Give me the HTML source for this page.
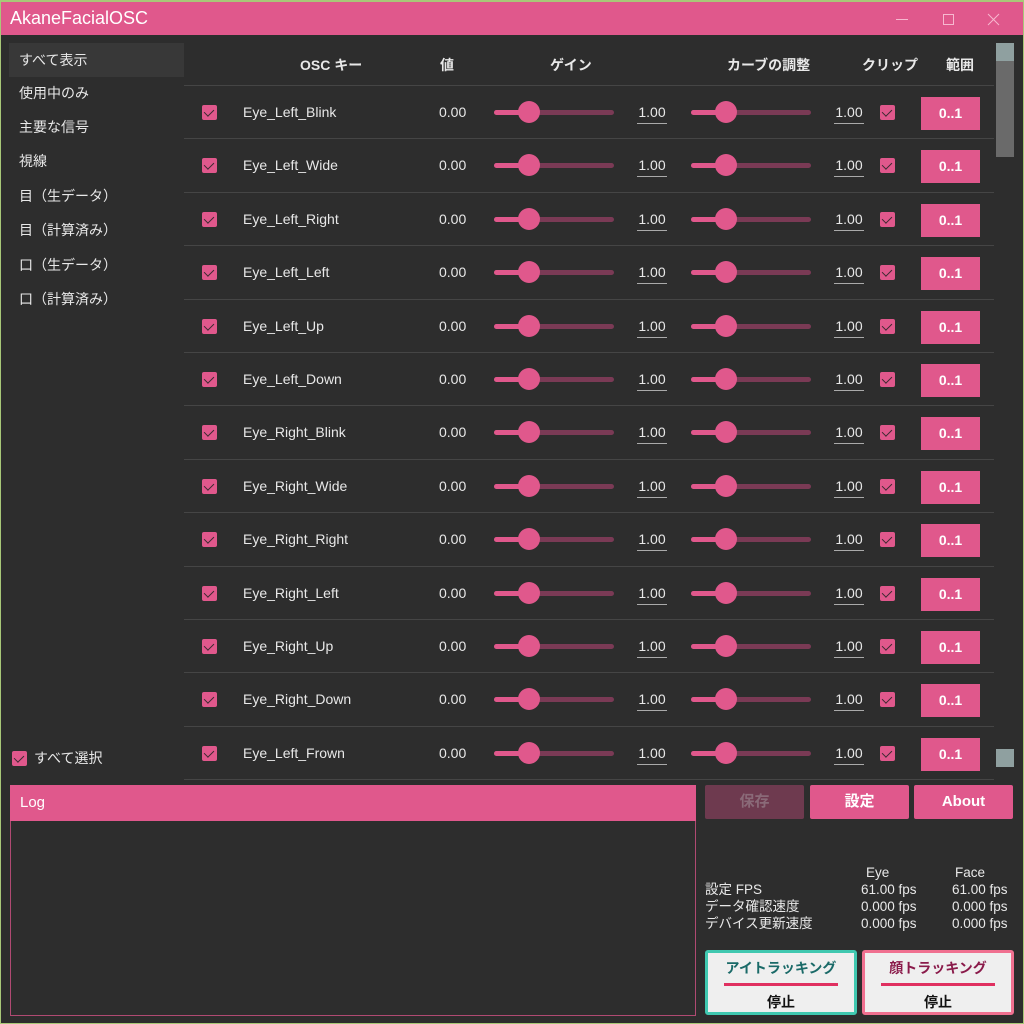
<!DOCTYPE html>
<html><head><meta charset="utf-8"><style>
*{box-sizing:border-box;margin:0;padding:0}
body{width:1024px;height:1024px;background:#2d2d2d;font-family:"Liberation Sans","Noto Sans CJK JP",sans-serif;color:#e8e8e8;position:relative;overflow:hidden;font-size:14px}
.frame{position:absolute;left:0;top:0;width:1024px;height:1024px;border:1px solid #a8c878;border-top-width:2px}
.title{position:absolute;left:1px;top:2px;width:1022px;height:33px;background:#e0588c;color:#fff;font-size:18px;line-height:33px;padding-left:9px}
.side{position:absolute;left:9px;width:175px;height:34px;line-height:34px;padding-left:10px;font-size:14px}
.ab{position:absolute}
.row{position:absolute;left:184px;width:810px;height:53.4px;border-bottom:1px solid #454545}
.cb{position:absolute;width:15px;height:15px;background:#e0588c;border-radius:2px}
.cb:after{content:"";position:absolute;left:4px;top:2px;width:5px;height:8px;border:solid #3a2a30;border-width:0 1.6px 1.6px 0;transform:rotate(45deg)}
.tr{position:absolute;height:5px;background:#7a3a55;border-radius:3px}
.tf{position:absolute;height:5px;background:#e0588c;border-radius:3px}
.th{position:absolute;width:22px;height:22px;border-radius:50%;background:#e0588c}
.num{position:absolute;width:30px;text-align:center;border-bottom:1px solid #aaa;padding-bottom:3px}
.rb{position:absolute;width:59px;height:33px;background:#e0588c;color:#fff;text-align:center;line-height:33px;font-weight:bold}
.btn{position:absolute;top:785px;width:99px;height:34px;line-height:34px;text-align:center;font-weight:bold;font-size:15px;border-radius:2px}
</style></head><body>
<div class="frame"></div>
<div class="title">AkaneFacialOSC</div>
<svg class="ab" style="left:880px;top:2px" width="140" height="33">
<line x1="16" y1="17.5" x2="28" y2="17.5" stroke="#f7b8d0" stroke-width="1"/>
<rect x="63.5" y="12.5" width="10" height="10" fill="none" stroke="#f7b8d0" stroke-width="1"/>
<line x1="108" y1="12" x2="119" y2="23" stroke="#f7b8d0" stroke-width="1"/>
<line x1="119" y1="12" x2="108" y2="23" stroke="#f7b8d0" stroke-width="1"/>
</svg>

<div class="side" style="top:43px;background:#383838">すべて表示</div>
<div class="side" style="top:76px">使用中のみ</div>
<div class="side" style="top:110px">主要な信号</div>
<div class="side" style="top:144px">視線</div>
<div class="side" style="top:179px">目（生データ）</div>
<div class="side" style="top:213px">目（計算済み）</div>
<div class="side" style="top:248px">口（生データ）</div>
<div class="side" style="top:282px">口（計算済み）</div>
<div class="cb" style="left:12px;top:751px"></div>
<div class="ab" style="left:34px;top:748px">すべて選択</div>

<div class="ab" style="left:184px;top:43px;width:810px;height:43px;border-bottom:1px solid #454545;font-weight:bold;font-size:14px">
<span class="ab" style="left:116px;top:12px">OSC キー</span>
<span class="ab" style="left:256px;top:12px">値</span>
<span class="ab" style="left:366px;top:12px">ゲイン</span>
<span class="ab" style="left:543px;top:12px">カーブの調整</span>
<span class="ab" style="left:678px;top:12px">クリップ</span>
<span class="ab" style="left:762px;top:12px">範囲</span>
</div>

<div class="ab" style="left:995px;top:43px;width:19px;height:737px;background:#2d2d2d"></div>
<div class="ab" style="left:996px;top:43px;width:18px;height:114px;background:#6a6a6a"></div>
<div class="ab" style="left:996px;top:43px;width:18px;height:18px;background:#8fa0a0"></div>
<div class="ab" style="left:996px;top:749px;width:18px;height:18px;background:#8fa0a0"></div>

<div id="rows"></div>
<script>
var n=["Eye_Left_Blink","Eye_Left_Wide","Eye_Left_Right","Eye_Left_Left","Eye_Left_Up","Eye_Left_Down","Eye_Right_Blink","Eye_Right_Wide","Eye_Right_Right","Eye_Right_Left","Eye_Right_Up","Eye_Right_Down","Eye_Left_Frown"];
var h="";
for(var i=0;i<n.length;i++){var t=86+i*53.4;
h+='<div class="row" style="top:'+t+'px">'+
'<div class="cb" style="left:18px;top:19px"></div>'+
'<span class="ab" style="left:59px;top:18px">'+n[i]+'</span>'+
'<span class="ab" style="left:255px;top:18px">0.00</span>'+
'<div class="tr" style="left:310px;top:24px;width:120px"></div><div class="tf" style="left:310px;top:24px;width:35px"></div><div class="th" style="left:334px;top:15px"></div>'+
'<span class="num" style="left:453px;top:18px">1.00</span>'+
'<div class="tr" style="left:507px;top:24px;width:120px"></div><div class="tf" style="left:507px;top:24px;width:35px"></div><div class="th" style="left:531px;top:15px"></div>'+
'<span class="num" style="left:650px;top:18px">1.00</span>'+
'<div class="cb" style="left:696px;top:19px"></div>'+
'<div class="rb" style="left:737px;top:11px">0..1</div></div>';}
document.getElementById("rows").innerHTML=h;
</script>
<div class="ab" style="left:184px;top:780px;width:830px;height:4px;background:#2d2d2d"></div>

<div class="ab" style="left:10px;top:785px;width:686px;height:231px;border:1px solid #b04a72"></div>
<div class="ab" style="left:10px;top:785px;width:686px;height:36px;background:#e0588c;color:#fff;line-height:36px;padding-left:10px;font-size:15px">Log</div>

<div class="btn" style="left:705px;background:#6e3a4f;color:#8a6a78">保存</div>
<div class="btn" style="left:810px;background:#e0588c;color:#fff">設定</div>
<div class="btn" style="left:914px;background:#e0588c;color:#fff">About</div>

<div class="ab" style="left:705px;top:864px;width:310px;font-size:13.5px;line-height:17px">
<div style="position:absolute;left:161px;top:0">Eye</div><div style="position:absolute;left:250px;top:0">Face</div>
<div style="position:absolute;left:0;top:17px">設定 FPS<br>データ確認速度<br>デバイス更新速度</div>
<div style="position:absolute;left:156px;top:17px">61.00 fps<br>0.000 fps<br>0.000 fps</div>
<div style="position:absolute;left:247px;top:17px">61.00 fps<br>0.000 fps<br>0.000 fps</div>
</div>

<div class="ab" style="left:705px;top:950px;width:152px;height:65px;background:#efefef;border:3px solid #40c8b0;border-radius:3px;color:#1a6a68;text-align:center;font-weight:bold">
<div style="margin-top:5px">アイトラッキング</div>
<div style="width:114px;height:3px;background:#e03060;margin:5px auto 6px"></div>
<div style="color:#111">停止</div></div>
<div class="ab" style="left:862px;top:950px;width:152px;height:65px;background:#efefef;border:3px solid #f07090;border-radius:3px;color:#8a1a4a;text-align:center;font-weight:bold">
<div style="margin-top:5px">顔トラッキング</div>
<div style="width:114px;height:3px;background:#e03060;margin:5px auto 6px"></div>
<div style="color:#111">停止</div></div>
</body></html>
